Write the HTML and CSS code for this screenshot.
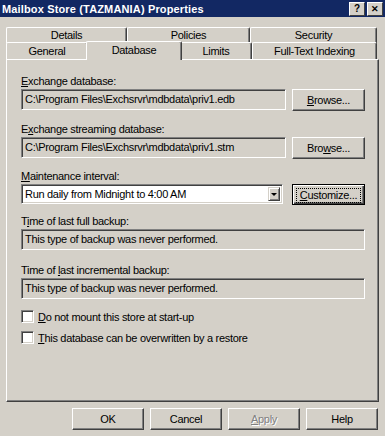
FILE: index.html
```html
<!DOCTYPE html>
<html lang="en">
<head>
    <meta charset="UTF-8">
    <title>Mailbox Store (TAZMANIA) Properties</title>
    <link rel="stylesheet" href="styles.css">
</head>
<body>
    <div class="dialog">
        <!-- Caption -->
        <div class="titlebar">
            <span class="title">Mailbox Store (TAZMANIA) Properties</span>
            <div class="caption-buttons">
                <span class="cap-btn">?</span>
                <span class="cap-btn close">&#x2715;</span>
            </div>
        </div>

        <!-- Tabs -->
        <div class="tabs">
            <div class="tab-row back">
                <div class="tab w-details">Details</div>
                <div class="tab w-policies">Policies</div>
                <div class="tab w-security">Security</div>
            </div>
            <div class="tab-row front">
                <div class="tab w-general">General</div>
                <div class="tab w-database selected">Database</div>
                <div class="tab w-limits">Limits</div>
                <div class="tab w-fulltext">Full-Text Indexing</div>
            </div>
        </div>

        <!-- Database page -->
        <div class="panel">
            <div class="group">
                <div class="label"><u>E</u>xchange database:</div>
                <div class="field-row">
                    <div class="edit readonly path">C:\Program Files\Exchsrvr\mdbdata\priv1.edb</div>
                    <div class="button browse"><u>B</u>rowse...</div>
                </div>
            </div>
            <div class="group tight">
                <div class="label">E<u>x</u>change streaming database:</div>
                <div class="field-row">
                    <div class="edit readonly path">C:\Program Files\Exchsrvr\mdbdata\priv1.stm</div>
                    <div class="button browse">Bro<u>w</u>se...</div>
                </div>
            </div>
            <div class="group tighter">
                <div class="label"><u>M</u>aintenance interval:</div>
                <div class="field-row">
                    <div class="combo">
                        <span class="combo-text">Run daily from Midnight to 4:00 AM</span>
                        <span class="combo-arrow"><span class="arrow"></span></span>
                    </div>
                    <div class="button browse default"><span class="focus"><u>C</u>ustomize...</span></div>
                </div>
            </div>
            <div class="group loose">
                <div class="label">T<u>i</u>me of last full backup:</div>
                <div class="edit readonly wide">This type of backup was never performed.</div>
            </div>
            <div class="group">
                <div class="label">Time of <u>l</u>ast incremental backup:</div>
                <div class="edit readonly wide">This type of backup was never performed.</div>
            </div>
            <div class="checks">
                <label class="check"><span class="box"></span><span><u>D</u>o not mount this store at start-up</span></label>
                <label class="check"><span class="box"></span><span><u>T</u>his database can be overwritten by a restore</span></label>
            </div>
        </div>

        <!-- Dialog buttons -->
        <div class="footer">
            <div class="button cmd">OK</div>
            <div class="button cmd">Cancel</div>
            <div class="button cmd disabled"><u>A</u>pply</div>
            <div class="button cmd">Help</div>
        </div>
    </div>
</body>
</html>
```

FILE: styles.css
```css
body {
    margin: 0;
    padding: 0;
    background-color: #d4d0c8;
    font-family: 'Liberation Sans', Arial, sans-serif;
    font-size: 11px;
    letter-spacing: -0.3px;
    color: #000;
}

.dialog {
    width: 385px;
    height: 436px;
    overflow: hidden;
}

u {
    text-decoration: underline;
    text-underline-offset: 1px;
}

/* Caption bar */
.titlebar {
    height: 17px;
    background-color: #122863;
    display: flex;
    justify-content: space-between;
    align-items: center;
    padding: 0 2px 0 2px;
}

.title {
    color: #fff;
    font-weight: bold;
    font-size: 11px;
    letter-spacing: 0.15px;
}

.caption-buttons {
    display: flex;
    gap: 2px;
}

.cap-btn {
    width: 14px;
    height: 12px;
    background-color: #d4d0c8;
    border: 1px solid;
    border-color: #fff #404040 #404040 #fff;
    font-weight: bold;
    font-size: 10px;
    letter-spacing: 0;
    line-height: 12px;
    text-align: center;
}

.cap-btn.close {
    font-size: 9px;
}

/* Tabs */
.tabs {
    padding: 10px 6px 0 6px;
}

.tab-row {
    display: flex;
    height: 16px;
}

.tab {
    box-sizing: border-box;
    border-top: 1px solid #fff;
    border-left: 1px solid #fff;
    border-right: 1px solid #404040;
    box-shadow: inset -1px 0 #808080;
    border-radius: 2px 2px 0 0;
    background-color: #d4d0c8;
    text-align: center;
    line-height: 15px;
}

.w-details { width: 121px; }
.w-policies { width: 123px; }
.w-security { width: 127px; }
.w-general { width: 82px; }
.w-database { width: 92px; }
.w-limits { width: 72px; }
.w-fulltext { width: 125px; }

.tab-row.front {
    align-items: flex-end;
}

.tab-row.front .tab {
    padding-top: 1px;
}

.tab.selected {
    position: relative;
    z-index: 1;
    width: 96px;
    height: 19px;
    margin: 0 -2px -1px -2px;
    padding-top: 2px;
}

/* Page panel */
.panel {
    box-sizing: border-box;
    margin: 0 6px;
    height: 343px;
    border-top: 1px solid #fff;
    border-left: 1px solid #fff;
    border-right: 1px solid #404040;
    border-bottom: 1px solid #404040;
    box-shadow: inset -1px -1px #808080;
    padding: 14px 13px 0 14px;
}

.group {
    margin-bottom: 11px;
}

.group.tight {
    margin-bottom: 10px;
}

.group.tighter {
    margin-bottom: 9px;
}

.group.loose {
    margin-bottom: 13px;
}

.label {
    height: 14px;
    line-height: 14px;
    margin-bottom: 1px;
}

.field-row {
    display: flex;
    justify-content: space-between;
    align-items: flex-start;
}

.edit {
    box-sizing: border-box;
    height: 21px;
    border: 1px solid;
    border-color: #808080 #fff #fff #808080;
    box-shadow: inset 1px 1px #404040, inset -1px -1px #d4d0c8;
    padding: 0 3px;
    line-height: 19px;
    white-space: nowrap;
}

.path {
    width: 265px;
}

.wide {
    width: 344px;
}

.button {
    box-sizing: border-box;
    border: 1px solid;
    border-color: #fff #404040 #404040 #fff;
    box-shadow: inset -1px -1px #808080;
    text-align: center;
}

.browse {
    width: 73px;
    height: 22px;
    line-height: 20px;
}

.button.default {
    height: 21px;
    border: 1px solid #000;
    box-shadow: inset 1px 1px #fff, inset -1px -1px #404040, inset -2px -2px #808080;
    padding: 3px;
    line-height: 13px;
}

.focus {
    display: block;
    border: 1px dotted #000;
    height: 13px;
}

.combo {
    box-sizing: border-box;
    width: 262px;
    height: 20px;
    background-color: #fff;
    border: 1px solid;
    border-color: #808080 #fff #fff #808080;
    box-shadow: inset 1px 1px #404040, inset -1px -1px #d4d0c8;
    display: flex;
    align-items: center;
    justify-content: space-between;
    padding: 2px;
}

.combo-text {
    padding-left: 1px;
}

.combo-arrow {
    box-sizing: border-box;
    width: 12px;
    height: 14px;
    background-color: #d4d0c8;
    border: 1px solid;
    border-color: #d4d0c8 #404040 #404040 #d4d0c8;
    box-shadow: inset 1px 1px #fff, inset -1px -1px #808080;
    display: flex;
    align-items: center;
    justify-content: center;
}

.arrow {
    width: 0;
    height: 0;
    border-left: 3px solid transparent;
    border-right: 3px solid transparent;
    border-top: 3px solid #000;
}

/* Check boxes */
.checks {
    display: flex;
    flex-direction: column;
    gap: 8px;
    margin-top: 1px;
}

.check {
    display: flex;
    align-items: center;
    gap: 4px;
    height: 13px;
}

.box {
    box-sizing: border-box;
    width: 13px;
    height: 13px;
    background-color: #fff;
    border: 1px solid;
    border-color: #808080 #fff #fff #808080;
    box-shadow: inset 1px 1px #404040, inset -1px -1px #d4d0c8;
}

/* Footer */
.footer {
    display: flex;
    justify-content: flex-end;
    gap: 6px;
    padding: 6px 7px 0 0;
}

.cmd {
    width: 72px;
    height: 22px;
    line-height: 20px;
}

.cmd.disabled {
    color: #808080;
    text-shadow: 1px 1px #fff;
}
```
